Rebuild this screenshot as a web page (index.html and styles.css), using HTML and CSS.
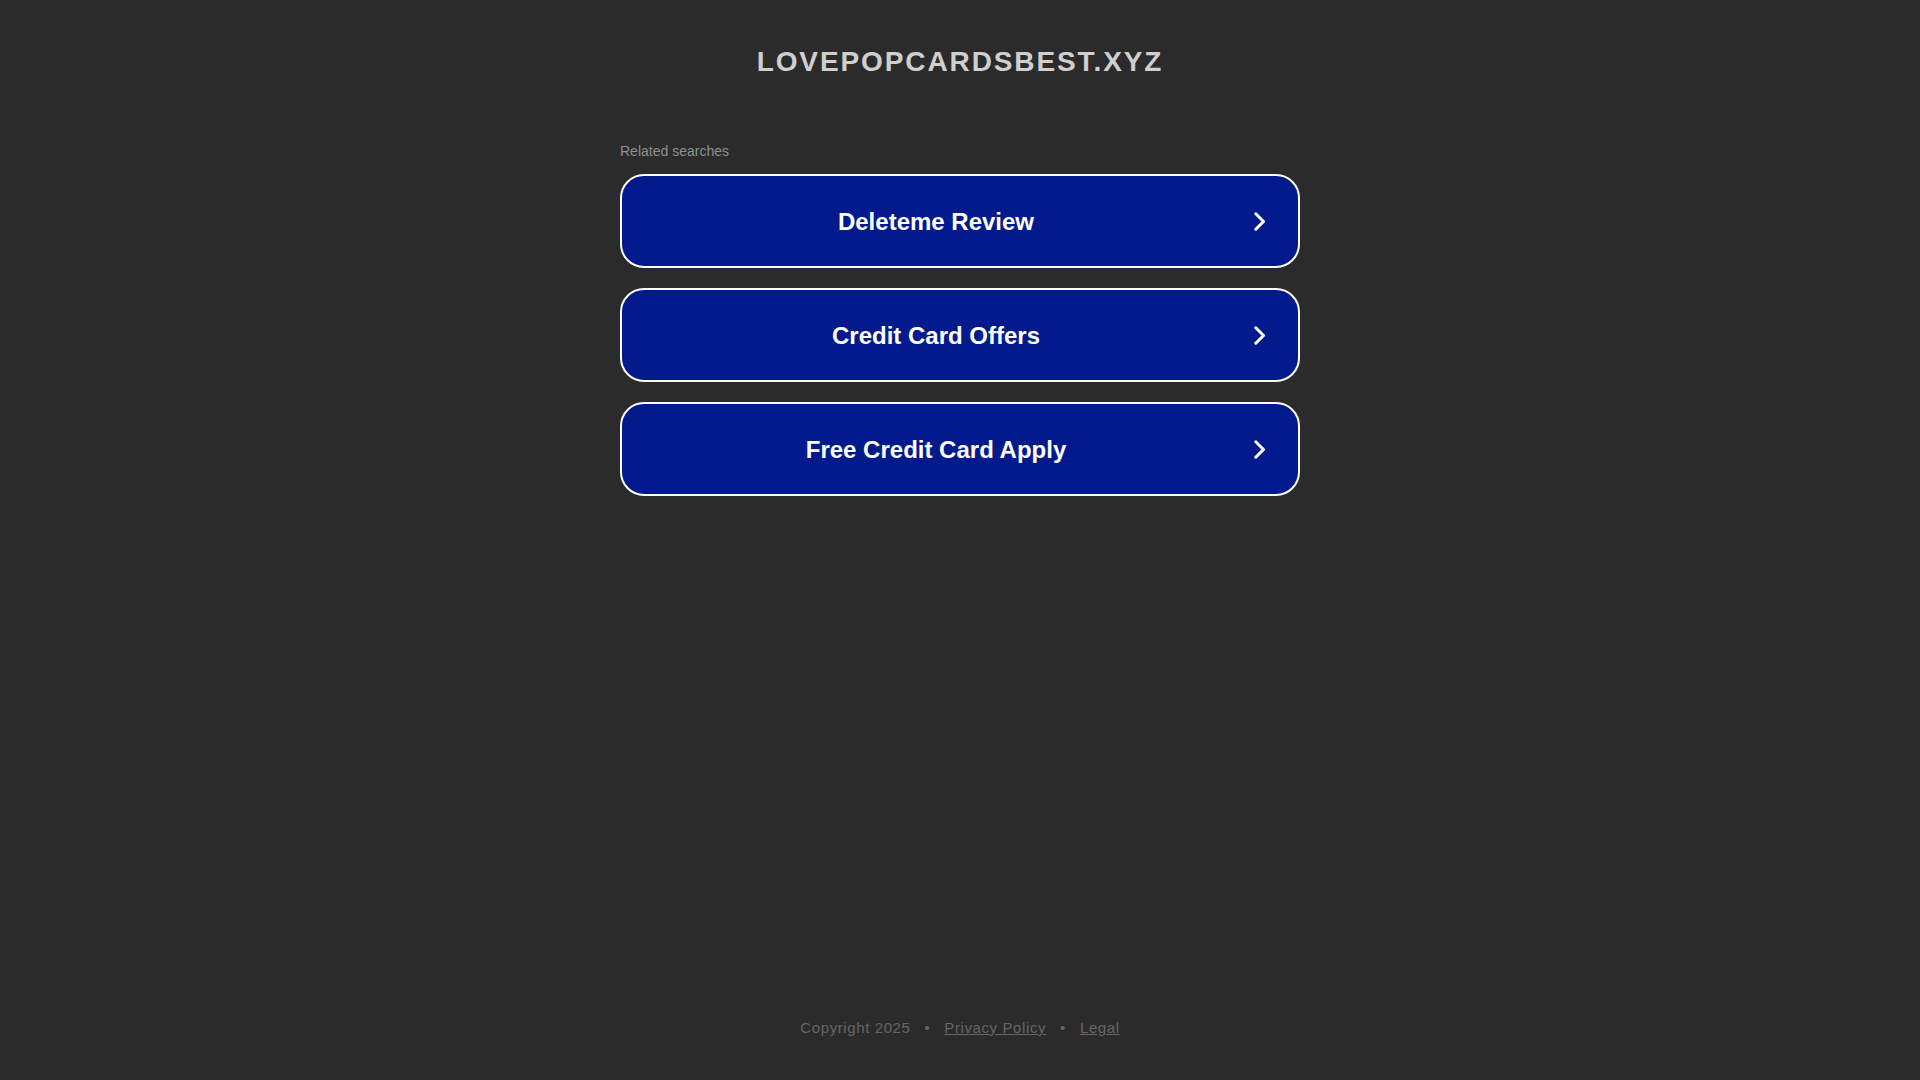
FILE: index.html
```html
<!DOCTYPE html>
<html lang="en">
<head>
<meta charset="utf-8">
<title>lovepopcardsbest.xyz</title>
<link rel="stylesheet" href="styles.css">
</head>
<body>
<div class="page">
  <header class="header">
    <h1 class="domain">lovepopcardsbest.xyz</h1>
  </header>
  <main class="content">
    <p class="related">Related searches</p>
    <ul class="links">
      <li><a class="link" href="#"><span class="link-text">Deleteme Review</span><svg class="chev" viewBox="0 0 12 19" width="12" height="19"><polyline points="1.8,1.8 9.5,9.5 1.8,17.2"/></svg></a></li>
      <li><a class="link" href="#"><span class="link-text">Credit Card Offers</span><svg class="chev" viewBox="0 0 12 19" width="12" height="19"><polyline points="1.8,1.8 9.5,9.5 1.8,17.2"/></svg></a></li>
      <li><a class="link" href="#"><span class="link-text">Free Credit Card Apply</span><svg class="chev" viewBox="0 0 12 19" width="12" height="19"><polyline points="1.8,1.8 9.5,9.5 1.8,17.2"/></svg></a></li>
    </ul>
  </main>
  <footer class="footer">
    <span>Copyright 2025</span>
    <span class="dot">•</span>
    <a href="#">Privacy Policy</a>
    <span class="dot">•</span>
    <a href="#">Legal</a>
  </footer>
</div>
</body>
</html>
```

FILE: styles.css
```css
html, body {
  margin: 0;
  padding: 0;
}

body {
  background: #2b2b2b;
  font-family: "Liberation Sans", Arial, sans-serif;
}

.page {
  min-height: 100vh;
  display: flex;
  flex-direction: column;
  align-items: center;
}

.header {
  padding-top: 45px;
}

.domain {
  margin: 0;
  font-size: 28px;
  line-height: 34px;
  font-weight: bold;
  text-transform: uppercase;
  letter-spacing: 1.9px;
  color: #cfcfcf;
  text-align: center;
}

.content {
  width: 680px;
  margin-top: 64px;
}

.related {
  margin: 0 0 15px 0;
  font-size: 14px;
  line-height: 16px;
  color: #909090;
}

.links {
  list-style: none;
  margin: 0;
  padding: 0;
  display: flex;
  flex-direction: column;
  gap: 20px;
}

.link {
  box-sizing: border-box;
  height: 94px;
  display: flex;
  align-items: center;
  padding: 0 32px 0 26px;
  gap: 30px;
  background: #021a8b;
  border: 2px solid #ffffff;
  border-radius: 24px;
  text-decoration: none;
  color: #ffffff;
}

.link-text {
  flex: 1;
  padding-top: 2px;
  text-align: center;
  font-size: 24px;
  font-weight: bold;
}

.chev {
  flex: none;
  fill: none;
  stroke: #ffffff;
  stroke-width: 3;
  stroke-linecap: round;
  stroke-linejoin: round;
}

.footer {
  margin-top: auto;
  padding-bottom: 43px;
  display: flex;
  gap: 14px;
  font-size: 15px;
  line-height: 18px;
  letter-spacing: 0.6px;
  color: #666666;
}

.footer a {
  color: #666666;
  text-decoration: underline;
}
```
